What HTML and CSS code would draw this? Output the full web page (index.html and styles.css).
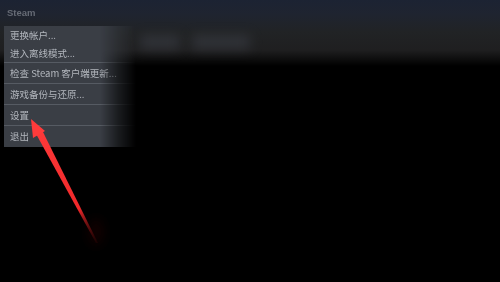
FILE: index.html
```html
<!DOCTYPE html>
<html>
<head>
<meta charset="utf-8">
<link rel="stylesheet" href="styles.css">
</head>
<body>
<div class="app">
  <div class="header">
    <div class="brand">Steam</div>
    <div class="blobs">
      <div class="blob blob-a"></div>
      <div class="blob blob-b"></div>
    </div>
  </div>
  <div class="content"></div>

  <div class="menu">
    <div class="item tight">更换帐户...</div>
    <div class="item tight">进入离线模式...</div>
    <div class="sep"></div>
    <div class="item">检查 Steam 客户端更新...</div>
    <div class="sep"></div>
    <div class="item">游戏备份与还原...</div>
    <div class="sep"></div>
    <div class="item">设置</div>
    <div class="sep"></div>
    <div class="item">退出</div>
  </div>

  <svg class="arrow" width="500" height="282" viewBox="0 0 500 282">
    <defs>
      <linearGradient id="shaft" x1="33" y1="125" x2="98" y2="245" gradientUnits="userSpaceOnUse">
        <stop offset="0" stop-color="#ff3b3b"/>
        <stop offset="0.7" stop-color="#f0282a"/>
        <stop offset="1" stop-color="#5a0808" stop-opacity="0.1"/>
      </linearGradient>
      <filter id="glow" x="-50%" y="-50%" width="200%" height="200%">
        <feGaussianBlur stdDeviation="6"/>
      </filter>
    </defs>
    <ellipse cx="96" cy="232" rx="7" ry="14" fill="#2a0303" opacity="0.45" filter="url(#glow)"/>
    <polygon points="35,132 41,128 98,243 96,243" fill="url(#shaft)"/>
    <polygon points="31,119 45,131 33,138" fill="#ff3b3b"/>
  </svg>
</div>
</body>
</html>
```

FILE: styles.css
```css
html, body {
  margin: 0;
  padding: 0;
  background: #000;
}
.app {
  position: relative;
  width: 500px;
  height: 282px;
  overflow: hidden;
  background: #000;
  font-family: "Noto Sans CJK SC", "Noto Sans", sans-serif;
}
.header {
  height: 66px;
  background: linear-gradient(to bottom, #1c2333 0px, #1f2430 14px, #212325 32px, #1f1f20 50px, #080808 62px, #000 66px);
  display: flex;
  flex-direction: column;
}
.brand {
  padding: 7px 0 0 7px;
  font-family: "Liberation Sans", Arial, sans-serif;
  font-size: 9.5px;
  font-weight: bold;
  color: #666b75;
  filter: blur(0.4px);
  line-height: 12px;
}
.blobs {
  display: flex;
  gap: 12px;
  padding: 16px 0 0 140px;
}
.blob {
  height: 14px;
  background: #383b42;
  filter: blur(6px);
  opacity: 0.7;
}
.blob-a { width: 40px; }
.blob-b { width: 58px; }
.content {
  flex: 1;
}
.menu {
  position: absolute;
  left: 4px;
  top: 26px;
  width: 132px;
  height: 121px;
  background: #3a3e45;
  -webkit-mask-image: linear-gradient(to right, #000 0, #000 96px, rgba(0,0,0,0.45) 114px, transparent 132px);
  mask-image: linear-gradient(to right, #000 0, #000 96px, rgba(0,0,0,0.45) 114px, transparent 132px);
  display: flex;
  flex-direction: column;
  box-sizing: border-box;
}
.item {
  height: 20px;
  line-height: 20px;
  padding-left: 6px;
  font-size: 9.5px;
  color: #b3b7be;
  white-space: nowrap;
  filter: blur(0.25px);
}
.item.tight {
  height: 18px;
  line-height: 18px;
}
.sep {
  height: 1px;
  background: #565b63;
  flex: none;
}
.arrow {
  position: absolute;
  left: 0;
  top: 0;
}
```
